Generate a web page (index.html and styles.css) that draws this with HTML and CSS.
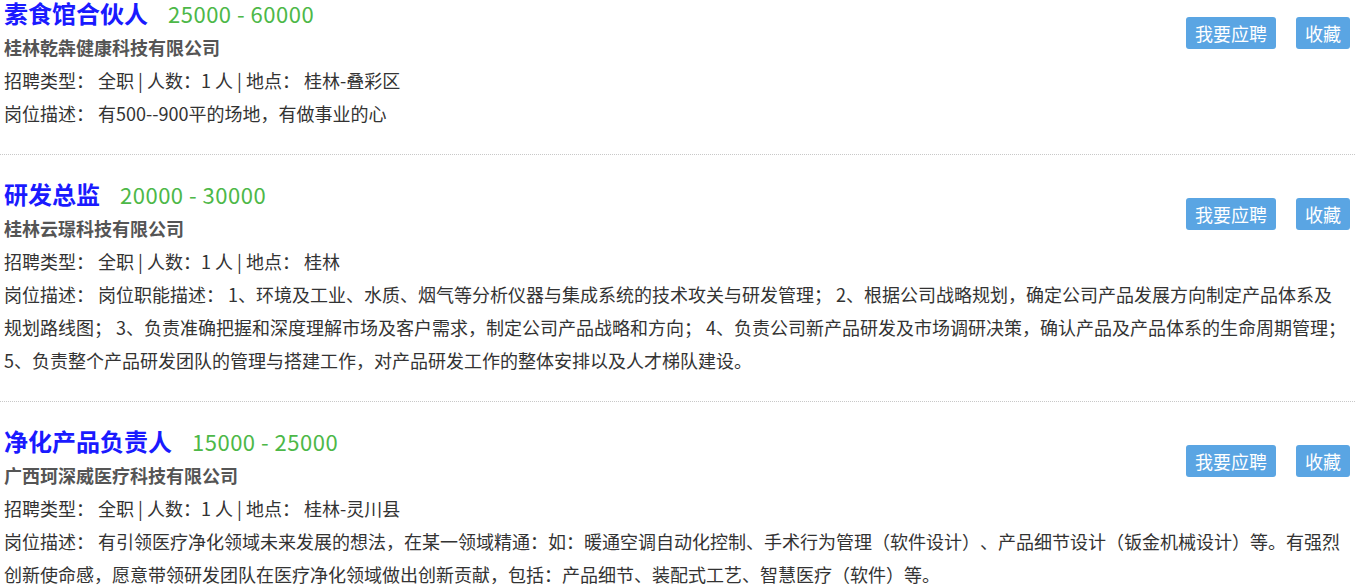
FILE: index.html
```html
<!DOCTYPE html>
<html lang="zh-CN">
<head>
    <meta charset="UTF-8">
    <meta name="viewport" content="width=device-width, initial-scale=1.0">
    <title>招聘信息</title>
    <link rel="stylesheet" href="styles.css">
</head>
<body>
    <div class="job-list">
        <div class="job">
            <div class="job-head">
                <div class="job-main">
                    <div class="job-title">
                        <a href="#">素食馆合伙人</a>
                        <span class="salary">25000 - 60000</span>
                    </div>
                    <div class="company">桂林乾犇健康科技有限公司</div>
                </div>
                <div class="job-actions">
                    <button class="btn">我要应聘</button>
                    <button class="btn">收藏</button>
                </div>
            </div>
            <p class="job-meta">招聘类型： 全职 | 人数：1 人 | 地点： 桂林-叠彩区</p>
            <p class="job-desc">岗位描述： 有500--900平的场地，有做事业的心</p>
        </div>

        <div class="job">
            <div class="job-head">
                <div class="job-main">
                    <div class="job-title">
                        <a href="#">研发总监</a>
                        <span class="salary">20000 - 30000</span>
                    </div>
                    <div class="company">桂林云璟科技有限公司</div>
                </div>
                <div class="job-actions">
                    <button class="btn">我要应聘</button>
                    <button class="btn">收藏</button>
                </div>
            </div>
            <p class="job-meta">招聘类型： 全职 | 人数：1 人 | 地点： 桂林</p>
            <p class="job-desc">岗位描述： 岗位职能描述： 1、环境及工业、水质、烟气等分析仪器与集成系统的技术攻关与研发管理； 2、根据公司战略规划，确定公司产品发展方向制定产品体系及规划路线图； 3、负责准确把握和深度理解市场及客户需求，制定公司产品战略和方向； 4、负责公司新产品研发及市场调研决策，确认产品及产品体系的生命周期管理； 5、负责整个产品研发团队的管理与搭建工作，对产品研发工作的整体安排以及人才梯队建设。</p>
        </div>

        <div class="job">
            <div class="job-head">
                <div class="job-main">
                    <div class="job-title">
                        <a href="#">净化产品负责人</a>
                        <span class="salary">15000 - 25000</span>
                    </div>
                    <div class="company">广西珂深威医疗科技有限公司</div>
                </div>
                <div class="job-actions">
                    <button class="btn">我要应聘</button>
                    <button class="btn">收藏</button>
                </div>
            </div>
            <p class="job-meta">招聘类型： 全职 | 人数：1 人 | 地点： 桂林-灵川县</p>
            <p class="job-desc">岗位描述： 有引领医疗净化领域未来发展的想法，在某一领域精通：如：暖通空调自动化控制、手术行为管理（软件设计）、产品细节设计（钣金机械设计）等。有强烈创新使命感，愿意带领研发团队在医疗净化领域做出创新贡献，包括：产品细节、装配式工艺、智慧医疗（软件）等。</p>
        </div>
    </div>
</body>
</html>
```
FILE: styles.css
```css
* {
    font-family: "Noto Sans CJK SC", "Liberation Sans", sans-serif;
}

body {
    margin: 0;
    background-color: #fff;
    color: #333;
    overflow: hidden;
    text-spacing-trim: space-all;
}

.job-list {
    margin-top: -26px;
}

.job {
    padding: 21px 5px 24px 4px;
    border-bottom: 1px dotted #c8c8c8;
}

.job-head {
    display: flex;
    justify-content: space-between;
    align-items: flex-start;
}

.job-title {
    display: flex;
    align-items: baseline;
    line-height: 36px;
}

.job-title a {
    font-size: 24px;
    font-weight: bold;
    color: #1a1aff;
    text-decoration: none;
}

.salary {
    margin-left: 20px;
    font-size: 22px;
    letter-spacing: 0.5px;
    color: #4db848;
}

.company {
    font-size: 18px;
    font-weight: bold;
    color: #555;
    line-height: 33px;
}

.job-actions {
    display: flex;
    gap: 20px;
    padding-top: 22px;
}

.btn {
    height: 32px;
    padding: 0 9px;
    border: none;
    border-radius: 3px;
    background-color: #5aa5e3;
    color: #fff;
    font-size: 18px;
    line-height: 32px;
    cursor: pointer;
}

.job-meta,
.job-desc {
    margin: 0;
    font-size: 18px;
    line-height: 33px;
}
```
